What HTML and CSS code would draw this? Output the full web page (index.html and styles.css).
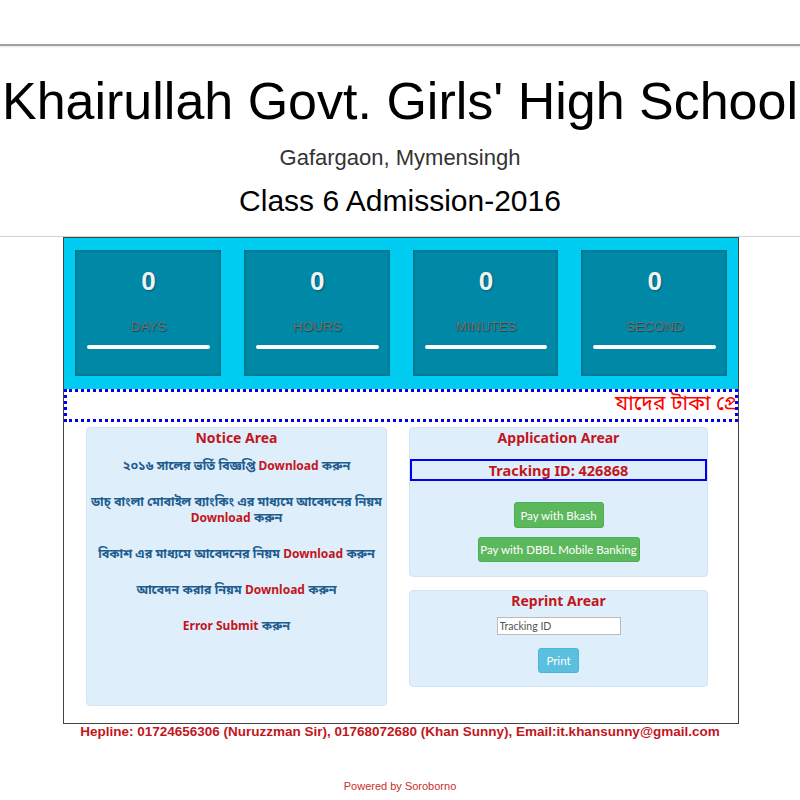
FILE: index.html
```html
<!DOCTYPE html>
<html>
<head>
<meta charset="utf-8">
<title>Khairullah Govt. Girls' High School</title>
<link rel="stylesheet" href="styles.css">
</head>
<body>
<header class="site-header">
  <h1 class="title">Khairullah Govt. Girls' High School</h1>
  <div class="subtitle">Gafargaon, Mymensingh</div>
  <div class="admission">Class 6 Admission-2016</div>
</header>

<main class="main-box">
  <section class="countdown">
    <div class="cd-box"><div class="cd-num">0</div><div class="cd-label">DAYS</div><div class="cd-bar"></div></div>
    <div class="cd-box"><div class="cd-num">0</div><div class="cd-label">HOURS</div><div class="cd-bar"></div></div>
    <div class="cd-box"><div class="cd-num">0</div><div class="cd-label">MINUTES</div><div class="cd-bar"></div></div>
    <div class="cd-box"><div class="cd-num">0</div><div class="cd-label">SECOND</div><div class="cd-bar"></div></div>
  </section>

  <div class="marquee"><span class="marquee-text">যাদের টাকা প্রেরণ সম্পন্ন হয়েছে তারা Tracking ID দিয়ে Print করুন</span></div>

  <section class="content">
    <div class="panel notice">
      <h2 class="panel-title">Notice Area</h2>
      <p class="notice-item">২০১৬ সালের ভর্তি বিজ্ঞপ্তি <span class="red">Download</span> করুন</p>
      <p class="notice-item">ডাচ্ বাংলা মোবাইল ব্যাংকিং এর মাধ্যমে আবেদনের নিয়ম<br><span class="red">Download</span> করুন</p>
      <p class="notice-item">বিকাশ এর মাধ্যমে আবেদনের নিয়ম <span class="red">Download</span> করুন</p>
      <p class="notice-item">আবেদন করার নিয়ম <span class="red">Download</span> করুন</p>
      <p class="notice-item"><span class="red">Error Submit</span> করুন</p>
    </div>

    <div class="right-col">
      <div class="panel app">
        <h2 class="panel-title">Application Arear</h2>
        <div class="tracking">Tracking ID: 426868</div>
        <div class="btn-row"><button class="btn btn-green btn-bkash">Pay with Bkash</button></div>
        <div class="btn-row"><button class="btn btn-green btn-dbbl">Pay with DBBL Mobile Banking</button></div>
      </div>
      <div class="panel reprint">
        <h2 class="panel-title">Reprint Arear</h2>
        <div class="input-row"><input class="track-input" type="text" value="Tracking ID"></div>
        <div class="btn-row"><button class="btn btn-blue">Print</button></div>
      </div>
    </div>
  </section>
</main>

<p class="helpline">Hepline: 01724656306 (Nuruzzman Sir), 01768072680 (Khan Sunny), Email:it.khansunny@gmail.com</p>
<p class="powered">Powered by Soroborno</p>
</body>
</html>
```

FILE: styles.css
```css
* { box-sizing: border-box; }

body {
  margin: 0;
  background: #fff;
  font-family: "Liberation Sans", Arial, sans-serif;
  color: #000;
}

.site-header {
  margin-top: 44px;
  border-top: 2px solid #a0a0a0;
  border-bottom: 1px solid #d4d4d4;
  box-shadow: inset 0 2px 2px -1px #e4e4e4;
  padding: 25px 0 18px;
  text-align: center;
}

.title {
  margin: 0;
  font-size: 52px;
  font-weight: normal;
  line-height: 60px;
  white-space: nowrap;
}

.subtitle {
  margin-top: 14px;
  font-size: 22px;
  line-height: 26px;
  color: #333;
}

.admission {
  margin-top: 13px;
  font-size: 30px;
  line-height: 34px;
}

.main-box {
  margin-left: 63px;
  width: 676px;
  border: 1px solid #444;
  background: #fff;
}

.countdown {
  background: #00ccf1;
  display: grid;
  grid-template-columns: repeat(4, 1fr);
  gap: 23px;
  padding: 12px 11px 13px;
}

.cd-box {
  height: 126px;
  background: #0089a7;
  box-shadow: inset 0 0 3px 1px #006c86;
  padding: 16px 11px 0 12px;
  text-align: center;
}

.cd-num {
  font-size: 26px;
  font-weight: bold;
  line-height: 30px;
  color: #f2f2f2;
  text-shadow: 1px 1px 2px rgba(0,0,0,0.35);
}

.cd-label {
  margin-top: 22px;
  font-size: 13.5px;
  line-height: 18px;
  color: #717171;
  text-shadow: 1px 1px 1px rgba(0,0,0,0.45);
}

.cd-bar {
  margin-top: 9px;
  height: 4px;
  border-radius: 3px;
  background: #fff;
}

.marquee {
  border: 3px dotted #0000ee;
  height: 33px;
  overflow: hidden;
  white-space: nowrap;
  padding-left: 548px;
  font-family: "Noto Sans Bengali", "Lohit Bengali", "FreeSans", "Noto Sans", sans-serif;
  font-size: 21px;
  line-height: 27px;
  color: #f00;
}

.content {
  display: grid;
  grid-template-columns: 301px 299px;
  column-gap: 22px;
  padding: 5px 0 17px 22px;
  align-items: start;
}

.panel {
  background: #dfeefb;
  border: 1px solid #d2e4f5;
  border-radius: 4px;
  text-align: center;
}

.panel-title {
  margin: 0;
  font-family: "Noto Sans", "DejaVu Sans", sans-serif;
  font-size: 14px;
  font-weight: bold;
  line-height: 20px;
  color: #c2161d;
}

.notice {
  height: 279px;
}

.notice-item {
  margin: 0;
  margin-top: 20px;
  font-family: "Noto Sans", "Noto Sans Bengali", "Lohit Bengali", "FreeSans", sans-serif;
  font-size: 12.6px;
  font-weight: bold;
  line-height: 16px;
  color: #215c8e;
}

.notice-item:first-of-type { margin-top: 10px; }

.red { color: #c2161d; font-size: 12px; }

.right-col {
  display: flex;
  flex-direction: column;
  gap: 13px;
}

.app {
  height: 150px;
}

.tracking {
  margin-top: 11px;
  border: 2px solid #0000ee;
  height: 22px;
  line-height: 18px;
  font-family: "Noto Sans", "DejaVu Sans", sans-serif;
  font-size: 14.5px;
  font-weight: bold;
  color: #c2161d;
}

.btn-row { display: flex; justify-content: center; }

.btn {
  border: none;
  border-radius: 3px;
  font-family: Lato, "Noto Sans", sans-serif;
  font-size: 11.5px;
  color: #fff;
  padding: 0;
}

.btn-green { background: #5cb85c; border: 1px solid #4cae4c; }

.btn-bkash { margin-top: 21px; width: 90px; height: 26px; }
.btn-dbbl { margin-top: 9px; width: 162px; height: 25px; }

.reprint { height: 97px; }

.input-row { margin-top: 6px; display: flex; justify-content: center; }

.track-input {
  width: 124px;
  height: 18px;
  border: 1px solid #bbb;
  padding: 0 2px;
  font-family: Lato, "Noto Sans", sans-serif;
  font-size: 10.5px;
  color: #555;
  background: #fff;
}

.btn-blue {
  margin-top: 13px;
  width: 41px;
  height: 25px;
  background: #5bc0de;
  border: 1px solid #46b8da;
}

.helpline {
  margin: 0;
  text-align: center;
  font-size: 13.5px;
  font-weight: bold;
  line-height: 16px;
  color: #c2161d;
}

.powered {
  margin: 39px 0 0;
  text-align: center;
  font-size: 11px;
  line-height: 14px;
  color: #c9302c;
}
```
